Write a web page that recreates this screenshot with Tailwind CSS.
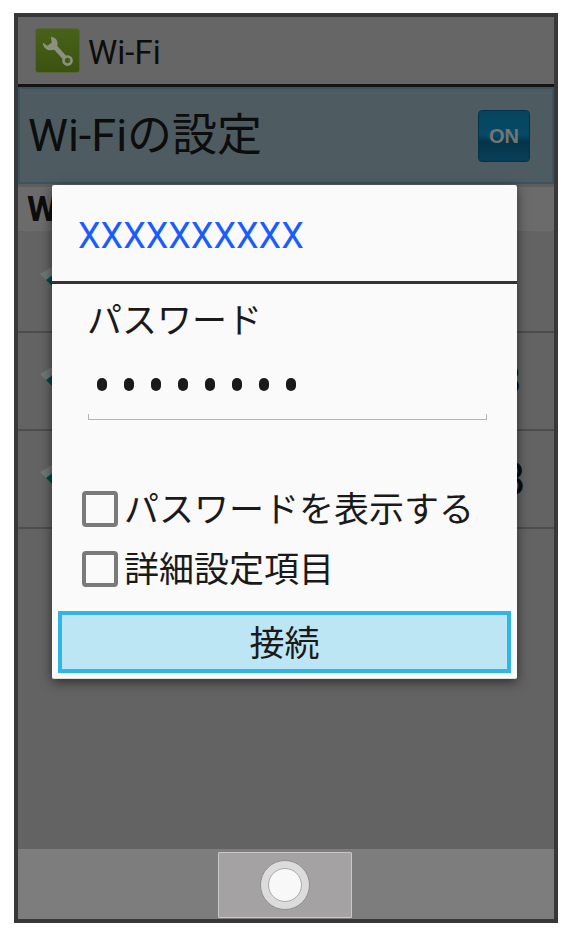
<!DOCTYPE html>
<html lang="ja">
<head>
<meta charset="UTF-8" />
<title>Wi-Fi</title>
<script src="https://cdn.jsdelivr.net/npm/@tailwindcss/browser@4"></script>
</head>
<body class="bg-white font-['Roboto','Noto_Sans_CJK_JP',sans-serif]">
<div class="w-[570px] h-[936px] pt-[13px] pl-[14px] overflow-hidden">
  <!-- phone screen, dimmed behind the dialog -->
  <div class="relative w-[544px] h-[910px] border-4 border-[#383838] bg-[#636363] flex flex-col overflow-hidden">
    <div class="h-[67px] bg-[#666666] flex items-center pl-[17px] gap-[8px] shrink-0">
      <div class="w-[45px] h-[45px] rounded-[3px] border border-[#56663a] bg-[linear-gradient(#49621a,#3a520e)] flex items-center justify-center">
        <svg width="43" height="43" viewBox="0 0 45 45" fill="none">
          <path d="M7 14 L12 17.5 L16.5 14 L15.5 8 C20 8 23.5 12 22.5 17 L20 21 C15 24 8 22 7 14 Z" fill="#8b9080"/>
          <path d="M19 18 L30 30" stroke="#8b9080" stroke-width="5"/>
          <circle cx="33" cy="33" r="4.2" fill="#445c12" stroke="#8b9080" stroke-width="2.8"/>
        </svg>
      </div>
      <span class="text-[33px] leading-none text-[#0d0d0d] pt-[4px]">Wi-Fi</span>
    </div>
    <div class="h-[3px] bg-[#141414] shrink-0"></div>
    <div class="h-[97px] bg-[#4e5c62] border-2 border-[#3c545e] flex items-center justify-between pl-[8px] pr-[22px] shrink-0">
      <span class="text-[45px] leading-none text-[#0d0d0d]">Wi-Fiの設定</span>
      <div class="w-[52px] h-[52px] rounded-[4px] border border-[#033348] bg-[linear-gradient(#07455f_0%,#064a66_48%,#04344a_60%,#073f58_100%)] flex items-center justify-center font-['Liberation_Sans',sans-serif] text-[20px] font-bold text-[#757575]">ON</div>
    </div>
    <div class="h-[3px] bg-[#5e5e5e] shrink-0"></div>
    <div class="h-[44px] bg-[#6b6b6b] flex items-center pl-[9px] text-[35px] leading-none font-bold text-[#0d0d0d] shrink-0">W</div>
    <div class="h-[102px] border-b-2 border-[#4d4d4d] flex items-center pl-[20px] shrink-0">
      <svg class="mb-[6px]" width="32" height="24" viewBox="0 0 32 24"><path d="M2 8 L14 1 L20 6 L9 15 Z" fill="#6f7876"/><path d="M8 14 L16 8 L20 18 L14 20 Z" fill="#004a42"/></svg>
    </div>
    <div class="h-[98px] border-b-2 border-[#4d4d4d] flex items-center justify-between pl-[20px] pr-[33px] shrink-0">
      <svg class="mb-[6px]" width="32" height="24" viewBox="0 0 32 24"><path d="M2 8 L14 1 L20 6 L9 15 Z" fill="#6f7876"/><path d="M8 14 L16 8 L20 18 L14 20 Z" fill="#004a42"/></svg>
      <span class="text-[40px] leading-none text-[#0d0d0d]">8</span>
    </div>
    <div class="h-[98px] border-b-2 border-[#4d4d4d] flex items-center justify-between pl-[20px] pr-[29px] shrink-0">
      <svg class="mb-[6px]" width="32" height="24" viewBox="0 0 32 24"><path d="M2 8 L14 1 L20 6 L9 15 Z" fill="#6f7876"/><path d="M8 14 L16 8 L20 18 L14 20 Z" fill="#004a42"/></svg>
      <span class="text-[46px] leading-none text-[#0d0d0d]">8</span>
    </div>
    <div class="flex-1"></div>
    <div class="h-[70px] bg-[#7d7d7d] flex justify-center items-end pb-[1px] pr-[2px] shrink-0">
      <div class="w-[134px] h-[66px] bg-[#a5a2a3] border border-[#c8c8c8] rounded-[1px] flex items-center justify-center">
        <div class="w-[50px] h-[50px] rounded-full bg-[#dcdcdc] border border-[#8f8f8f] flex items-center justify-center">
          <div class="w-[34px] h-[34px] rounded-full bg-[#f8f8f8] border border-[#aaaaaa]"></div>
        </div>
      </div>
    </div>

    <!-- dialog -->
    <div class="absolute left-[34px] top-[168px] w-[465px] h-[494px] bg-[#fafafa] border-b border-[#e0e0e0] rounded-[2px] shadow-[0_3px_12px_rgba(0,0,0,0.55)] flex flex-col">
      <div class="h-[99px] pl-[26px] pt-[28px] text-[36px] leading-[46px] text-[#1a5cff] border-b-[3px] border-[#333333] shrink-0">XXXXXXXXXX</div>
      <div class="pl-[35px] pt-[18px] text-[35px] leading-[40px] text-[#1a1a1a]">パスワード</div>
      <div class="ml-[36px] mr-[30px] mt-[21px] h-[57px] flex gap-[17px] pl-[8px] pt-[15px] border-b border-x border-[#b5b5b5] [border-image:linear-gradient(to_top,#b5b5b5_6px,transparent_6px)_1]">
        <span class="w-[10px] h-[13px] rounded-full bg-[#1a1a1a]"></span>
        <span class="w-[10px] h-[13px] rounded-full bg-[#1a1a1a]"></span>
        <span class="w-[10px] h-[13px] rounded-full bg-[#1a1a1a]"></span>
        <span class="w-[10px] h-[13px] rounded-full bg-[#1a1a1a]"></span>
        <span class="w-[10px] h-[13px] rounded-full bg-[#1a1a1a]"></span>
        <span class="w-[10px] h-[13px] rounded-full bg-[#1a1a1a]"></span>
        <span class="w-[10px] h-[13px] rounded-full bg-[#1a1a1a]"></span>
        <span class="w-[10px] h-[13px] rounded-full bg-[#1a1a1a]"></span>
      </div>
      <div class="flex items-center gap-[6px] pl-[30px] mt-[69px] h-[40px]">
        <span class="w-[36px] h-[36px] rounded-[4px] border-4 border-[#7a7a7a] shrink-0"></span>
        <span class="text-[35px] leading-none text-[#1a1a1a] whitespace-nowrap pt-[3px]">パスワードを表示する</span>
      </div>
      <div class="flex items-center gap-[6px] pl-[30px] mt-[20px] h-[40px]">
        <span class="w-[36px] h-[36px] rounded-[4px] border-4 border-[#7a7a7a] shrink-0"></span>
        <span class="text-[35px] leading-none text-[#1a1a1a] whitespace-nowrap pt-[3px]">詳細設定項目</span>
      </div>
      <div class="mx-[6px] mt-[22px] h-[62px] pt-[4px] bg-[#bde6f5] border-4 border-[#31b5e8] flex items-center justify-center text-[35px] leading-none text-[#1a1a1a]">接続</div>
    </div>
  </div>
</div>
</body>
</html>
